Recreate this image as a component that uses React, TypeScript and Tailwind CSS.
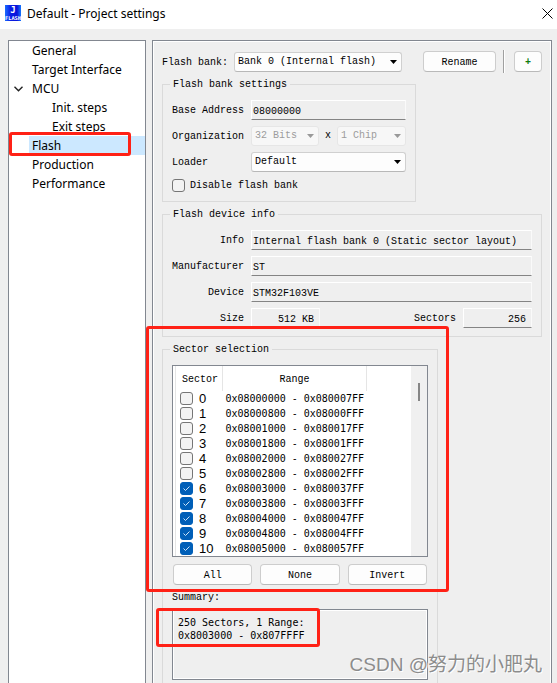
import { useState } from 'react';
import type { ReactNode } from 'react';

const mono = "font-['Liberation_Mono',monospace] text-[10px] leading-3";
const sans = "font-['Noto_Sans','Open_Sans',sans-serif]";

const pages = [
  { name: 'General' },
  { name: 'Target Interface' },
  { name: 'MCU', open: true },
  { name: 'Init. steps', nested: true },
  { name: 'Exit steps', nested: true },
  { name: 'Flash' },
  { name: 'Production' },
  { name: 'Performance' },
];

const ranges = [
  '0x08000000 - 0x080007FF',
  '0x08000800 - 0x08000FFF',
  '0x08001000 - 0x080017FF',
  '0x08001800 - 0x08001FFF',
  '0x08002000 - 0x080027FF',
  '0x08002800 - 0x08002FFF',
  '0x08003000 - 0x080037FF',
  '0x08003800 - 0x08003FFF',
  '0x08004000 - 0x080047FF',
  '0x08004800 - 0x08004FFF',
  '0x08005000 - 0x080057FF',
];

function AppIcon() {
  return (
    <svg className="size-4 shrink-0" viewBox="0 0 16 16" aria-hidden="true">
      <defs>
        <linearGradient id="blue" x1="0" y1="0" x2="1" y2="0">
          <stop offset="0" stopColor="#1a6cff" />
          <stop offset="0.35" stopColor="#0a1ee6" />
          <stop offset="0.75" stopColor="#0a14d8" />
          <stop offset="1" stopColor="#1478ff" />
        </linearGradient>
      </defs>
      <rect width="16" height="16" fill="url(#blue)" />
      <text x="8" y="8" textAnchor="middle" fill="#fff" fontFamily="DejaVu Sans Mono" fontWeight="700" fontSize="9">J</text>
      <text x="8" y="15" textAnchor="middle" fill="#fff" fontFamily="DejaVu Sans Mono" fontWeight="700" fontSize="5.300">FLASH</text>
    </svg>
  );
}

function Dropdown({ id, label, value, className, disabled }: { id: string; label?: string; value: string; className: string; disabled?: boolean }) {
  return (
    <div className={`relative ${className}`}>
      <select
        id={id}
        aria-label={label}
        disabled={disabled}
        className={`block h-5 w-full appearance-none rounded-[3px] border px-[3px] opacity-100 outline-none ${
          disabled ? 'border-[#e6e6e6] bg-[#f7f7f7] text-[#9c9c9c]' : 'border-[#d0d0d0] border-b-[#b8b8b8] bg-[#fdfdfd] text-black'
        } ${mono}`}
      >
        <option>{value}</option>
      </select>
      <svg className="pointer-events-none absolute top-2 right-[5px] h-1 w-[7px]" viewBox="0 0 7 4" aria-hidden="true">
        <path d="M0 0h7L3.500 4z" fill={disabled ? '#999' : '#000'} />
      </svg>
    </div>
  );
}

function Field({ id, value, className }: { id: string; value: string; className: string }) {
  return (
    <input
      id={id}
      readOnly
      defaultValue={value}
      className={`h-5 min-w-0 border border-t-white border-r-[#fafafa] border-b-[#848484] border-l-white bg-[#efefef] pt-0.5 pl-px outline-none ${mono} ${className}`}
    />
  );
}

function Label({ id, className = '', children }: { id: string; className?: string; children: ReactNode }) {
  return (
    <label htmlFor={id} className={`block pt-0.5 ${className}`}>
      {children}
    </label>
  );
}

function PushButton({ children, className = '', onClick }: { children: ReactNode; className?: string; onClick?: () => void }) {
  return (
    <button type="button" onClick={onClick} className={`h-[21px] rounded-[4px] border border-[#cdcdcd] border-b-[#b9b9b9] bg-[#fdfdfd] pt-0.5 text-center ${mono} ${className}`}>
      {children}
    </button>
  );
}

function Tick({ id, checked, onChange }: { id: string; checked: boolean; onChange: () => void }) {
  return (
    <span className="grid size-[13px] shrink-0">
      <input
        id={id}
        type="checkbox"
        checked={checked}
        onChange={onChange}
        className="col-start-1 row-start-1 size-[13px] appearance-none rounded-[3px] border border-[#767676] bg-[#f3f3f3] checked:border-[#005fb8] checked:bg-[#005fb8]"
      />
      {checked && (
        <svg className="pointer-events-none col-start-1 row-start-1 size-[13px]" viewBox="0 0 13 13" fill="none" stroke="#cfe4f7" aria-hidden="true">
          <path d="M3.500 6.500l2 2 4-4" />
        </svg>
      )}
    </span>
  );
}

function Group({ title, className, children }: { title: string; className: string; children: ReactNode }) {
  return (
    <fieldset className={`mt-[5px] min-w-0 border border-[#dadada] px-[9px] pt-[9px] ${className}`}>
      <legend className="-ml-0.5 px-[3px] pt-0.5">{title}</legend>
      {children}
    </fieldset>
  );
}

export default function App() {
  const [picked, setPicked] = useState(ranges.map((_, i) => i >= 6));
  const [off, setOff] = useState(false);

  return (
    <div className="relative flex h-screen flex-col overflow-hidden bg-[#efefef] text-black">
      <header className={`flex h-[29px] shrink-0 items-center bg-white pr-1 pl-[5px] pb-[3px] ${sans}`}>
        <AppIcon />
        <h1 className="ml-1.5 flex-1 pt-0.5 text-[12px] leading-4">Default - Project settings</h1>
        <button type="button" aria-label="Close" className="size-[11px]">
          <svg viewBox="0 0 11 11" className="size-[11px]" fill="none" stroke="#000" aria-hidden="true">
            <path d="M.5.5l10 10M10.500.5l-10 10" />
          </svg>
        </button>
      </header>

      <div className="flex shrink-0 gap-1.5 pt-[11px] pr-[5px] pl-2">
        <nav className={`w-[138px] shrink-0 border border-[#828790] bg-white text-[12px] leading-[19px] ${sans}`}>
          <ul>
            {pages.map((p) => (
              <li key={p.name} className="flex">
                <span className="flex w-5 items-center pl-[5px]">
                  {p.open && (
                    <svg className="h-[6px] w-[9px]" viewBox="0 0 9 6" fill="none" stroke="#222" strokeWidth="1.400" aria-hidden="true">
                      <path d="M.5.8l4 4 4-4" />
                    </svg>
                  )}
                </span>
                <a href="#" className={`h-[19px] flex-1 whitespace-nowrap ${p.nested ? 'pl-[23px]' : 'pl-[3px]'} ${p.name === 'Flash' ? 'bg-[#cce8ff]' : ''}`}>
                  {p.name}
                </a>
              </li>
            ))}
          </ul>
        </nav>

        <main className={`min-w-0 flex-1 border border-[#828790] pt-[10px] pr-[9px] pb-3 pl-[9px] ring-1 ring-white ring-inset ${mono}`}>
          <div className="flex h-[21px] items-center">
            <Label id="bank" className="w-[72px]">Flash bank:</Label>
            <Dropdown id="bank" value="Bank 0 (Internal flash)" className="w-[168px]" />
            <PushButton className="ml-[21px] w-[73px]">Rename</PushButton>
            <span className="ml-[7px] h-[23px] w-0.5 border-r border-l border-r-white border-l-[#a0a0a0]" />
            <PushButton className="ml-auto w-7 font-bold text-[#107c10]">+</PushButton>
          </div>

          <Group title="Flash bank settings" className="w-[254px] pb-[9px]">
            <div className="grid grid-cols-[79px_1fr] items-center gap-y-1.5">
              <Label id="base">Base Address</Label>
              <Field id="base" value="08000000" className="w-full" />
              <Label id="bits">Organization</Label>
              <div className="flex items-center">
                <Dropdown id="bits" value="32 Bits" className="w-[68px]" disabled />
                <span className="flex-1 text-center">x</span>
                <Dropdown id="chips" label="Chips" value="1 Chip" className="w-[69px]" disabled />
              </div>
              <Label id="loader">Loader</Label>
              <Dropdown id="loader" value="Default" className="w-full" />
              <div className="col-span-2 flex h-[14px] items-center gap-[5px]">
                <Tick id="disable" checked={off} onChange={() => setOff(!off)} />
                <Label id="disable">Disable flash bank</Label>
              </div>
            </div>
          </Group>

          <Group title="Flash device info" className="pb-2">
            <div className="grid grid-cols-[72px_1fr] items-center gap-x-[7px] gap-y-1.5">
              <Label id="info" className="text-right">Info</Label>
              <Field id="info" value="Internal flash bank 0 (Static sector layout)" className="w-full" />
              <Label id="maker" className="text-right">Manufacturer</Label>
              <Field id="maker" value="ST" className="w-full" />
              <Label id="device" className="text-right">Device</Label>
              <Field id="device" value="STM32F103VE" className="w-full" />
              <Label id="size" className="text-right">Size</Label>
              <div className="flex items-center">
                <Field id="size" value="512 KB" className="w-[69px] pr-[5px] text-right" />
                <Label id="sectors" className="mr-[7px] ml-auto">Sectors</Label>
                <Field id="sectors" value="256" className="w-[69px] pr-[5px] text-right" />
              </div>
            </div>
          </Group>

          <Group title="Sector selection" className="w-[276px] pb-3">
            <div className="flex h-48 border border-[#828790] bg-white pl-0.5">
              <table className="flex-1 table-fixed border-collapse">
                <thead>
                  <tr className="h-[25px]">
                    <th className="w-[47px] border-r border-l border-[#e5e5e5] p-0 pt-0.5 pl-[6px] text-left font-normal">Sector</th>
                    <th className="w-[144px] border-r border-[#e5e5e5] p-0 pt-0.5 font-normal">Range</th>
                    <th className="p-0" />
                  </tr>
                </thead>
                <tbody>
                  {ranges.map((range, i) => (
                    <tr key={range} className="h-[15px]">
                      <td className="border-l border-[#e5e5e5] p-0 pl-1">
                        <div className="flex h-[15px] items-center gap-1.5">
                          <Tick id={`sector-${i}`} checked={picked[i]} onChange={() => setPicked(picked.map((v, n) => (n === i ? !v : v)))} />
                          <label htmlFor={`sector-${i}`} className="font-['Liberation_Sans',sans-serif] text-[13px] leading-[15px]">{i}</label>
                        </div>
                      </td>
                      <td className="p-0 pl-[3px] font-['DejaVu_Sans_Mono',monospace] whitespace-nowrap">{range}</td>
                      <td className="p-0" />
                    </tr>
                  ))}
                </tbody>
              </table>
              <div className="flex w-4 shrink-0 justify-center bg-[#f0f0f0] pt-[17px]">
                <span className="h-[18px] w-0.5 bg-[#868686]" />
              </div>
            </div>
            <div className="mt-[7px] grid grid-cols-3 gap-2 px-px">
              <PushButton onClick={() => setPicked(ranges.map(() => true))}>All</PushButton>
              <PushButton onClick={() => setPicked(ranges.map(() => false))}>None</PushButton>
              <PushButton onClick={() => setPicked(picked.map((v) => !v))}>Invert</PushButton>
            </div>
            <Label id="summary" className="mt-[5px]">Summary:</Label>
            <textarea
              id="summary"
              readOnly
              defaultValue={'250 Sectors, 1 Range:\n0x8003000 - 0x807FFFF'}
              className="mt-[5px] block h-[71px] w-full resize-none border border-[#828790] bg-[#efefef] px-[5px] py-1.5 font-['DejaVu_Sans_Mono',monospace] text-[10px] leading-[13px] ring-1 ring-white outline-none ring-inset"
            />
          </Group>
        </main>
      </div>

      <div className="pointer-events-none absolute top-[132px] left-[9px] h-6 w-[122px] rounded-[3px] border-[3px] border-[#ff2116]" />
      <div className="pointer-events-none absolute top-[326px] left-[146px] h-[266px] w-[303px] rounded-[3px] border-[3px] border-[#ff2116]" />
      <div className="pointer-events-none absolute top-[608px] left-[156px] h-[39px] w-[164px] rounded-[3px] border-[3px] border-[#ff2116]" />
      <p className="pointer-events-none absolute right-[15px] bottom-[6px] font-['Liberation_Sans','Noto_Sans_CJK_SC',sans-serif] text-[19px] leading-6 whitespace-nowrap text-[#8c8c8c] [text-shadow:1px_1px_0_#fff]">
        CSDN @努力的小肥丸
      </p>
    </div>
  );
}
